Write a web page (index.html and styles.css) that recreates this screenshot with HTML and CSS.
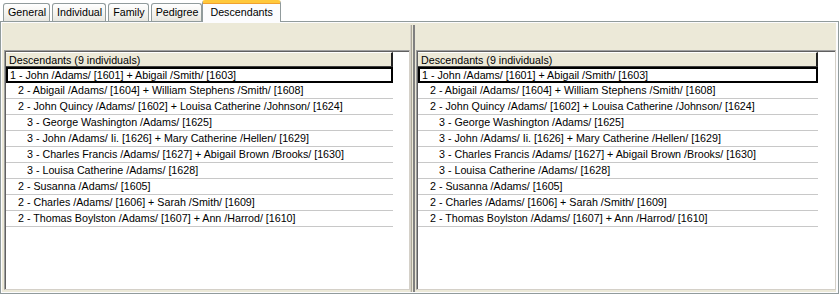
FILE: index.html
```html
<!DOCTYPE html>
<html>
<head>
<meta charset="utf-8">
<link rel="stylesheet" href="styles.css">
</head>
<body>
<div class="tabs">
  <div class="tab">General</div>
  <div class="tab">Individual</div>
  <div class="tab">Family</div>
  <div class="tab">Pedigree</div>
  <div class="tab active">Descendants</div>
</div>
<div class="panel">
  <div class="split">
    <div class="pane left">
      <div class="list">
        <div class="col">
          <div class="header">Descendants (9 individuals)</div>
          <div class="row sel l1">1 - John /Adams/ [1601] + Abigail /Smith/ [1603]</div>
          <div class="row l2">2 - Abigail /Adams/ [1604] + William Stephens /Smith/ [1608]</div>
          <div class="row l2">2 - John Quincy /Adams/ [1602] + Louisa Catherine /Johnson/ [1624]</div>
          <div class="row l3">3 - George Washington /Adams/ [1625]</div>
          <div class="row l3">3 - John /Adams/ Ii. [1626] + Mary Catherine /Hellen/ [1629]</div>
          <div class="row l3">3 - Charles Francis /Adams/ [1627] + Abigail Brown /Brooks/ [1630]</div>
          <div class="row l3">3 - Louisa Catherine /Adams/ [1628]</div>
          <div class="row l2">2 - Susanna /Adams/ [1605]</div>
          <div class="row l2">2 - Charles /Adams/ [1606] + Sarah /Smith/ [1609]</div>
          <div class="row l2">2 - Thomas Boylston /Adams/ [1607] + Ann /Harrod/ [1610]</div>
        </div>
      </div>
    </div>
    <div class="splitter"></div>
    <div class="pane right">
      <div class="list">
        <div class="col wide">
          <div class="header">Descendants (9 individuals)</div>
          <div class="row sel l1">1 - John /Adams/ [1601] + Abigail /Smith/ [1603]</div>
          <div class="row l2">2 - Abigail /Adams/ [1604] + William Stephens /Smith/ [1608]</div>
          <div class="row l2">2 - John Quincy /Adams/ [1602] + Louisa Catherine /Johnson/ [1624]</div>
          <div class="row l3">3 - George Washington /Adams/ [1625]</div>
          <div class="row l3">3 - John /Adams/ Ii. [1626] + Mary Catherine /Hellen/ [1629]</div>
          <div class="row l3">3 - Charles Francis /Adams/ [1627] + Abigail Brown /Brooks/ [1630]</div>
          <div class="row l3">3 - Louisa Catherine /Adams/ [1628]</div>
          <div class="row l2">2 - Susanna /Adams/ [1605]</div>
          <div class="row l2">2 - Charles /Adams/ [1606] + Sarah /Smith/ [1609]</div>
          <div class="row l2">2 - Thomas Boylston /Adams/ [1607] + Ann /Harrod/ [1610]</div>
        </div>
      </div>
    </div>
  </div>
</div>
</body>
</html>
```

FILE: styles.css
```css
* { box-sizing: border-box; }
html, body { margin: 0; padding: 0; }
body {
  background: #ffffff;
  font-family: "Liberation Sans", Arial, sans-serif;
  font-size: 10.7px;
  color: #000;
  width: 839px;
  height: 295px;
  overflow: hidden;
}
.tabs {
  display: flex;
  align-items: flex-end;
  height: 21px;
  padding-left: 3px;
}
.tab {
  height: 18px;
  line-height: 17px;
  padding: 0 3px 0 4px;
  margin-right: 2px;
  border: 1px solid #919b9c;
  border-bottom: none;
  border-radius: 3px 3px 0 0;
  background: linear-gradient(#ffffff, #f3f2ee 60%, #e8e7e0);
  white-space: nowrap;
}
.tab.active {
  height: 22px;
  line-height: 18px;
  margin-left: -2px;
  margin-bottom: -1px;
  padding: 0 7px;
  background: #fcfcfe;
  border-top: 3px solid #ffc83c;
  box-shadow: inset 0 1px 0 #f0a030;
  position: relative;
  z-index: 1;
}
.panel {
  border: 1px solid #919b9c;
  background: #fcfcfe;
  padding: 1px 2px 1px 1px;
  height: 273px;
}
.split {
  display: flex;
  height: 100%;
  background: #ece9d8;
}
.pane {
  padding: 27px 0 2px 0;
}
.pane.left { width: 408px; padding-left: 2px; }
.pane.right { flex: 1; }
.splitter {
  width: 6px;
  background: linear-gradient(to right, #d4d0c8 0, #d4d0c8 1px, #aca899 1px, #aca899 2px, #ece9d8 2px, #ece9d8 3px, #808080 3px, #808080 5px, #ece9d8 5px);
  margin-top: 2px;
}
.list {
  height: 100%;
  background: #fff;
  border-top: 1px solid #a0a0a0;
  border-left: 1px solid #a0a0a0;
  border-right: 1px solid #d4d0c8;
  border-bottom: 1px solid #d4d0c8;
  box-shadow: inset 1px 1px 0 #606060;
  padding: 1px 0 0 1px;
}
.col { width: 387px; }
.col.wide { width: 400px; }
.header {
  height: 15px;
  line-height: 14px;
  padding-left: 3px;
  background: #ece9d8;
  border-top: 1px solid #fff;
  border-right: 2px solid #202020;
  border-bottom: 1px solid #404040;
  white-space: nowrap;
}
.row {
  height: 16px;
  line-height: 15px;
  border-bottom: 1px solid #c8c8c8;
  white-space: nowrap;
  overflow: hidden;
}
.row.sel {
  border: 2px solid #000;
  line-height: 12px;
}
.l1 { padding-left: 3px; }
.row.sel.l1 { padding-left: 2px; }
.l2 { padding-left: 12px; }
.l3 { padding-left: 21px; }
```
